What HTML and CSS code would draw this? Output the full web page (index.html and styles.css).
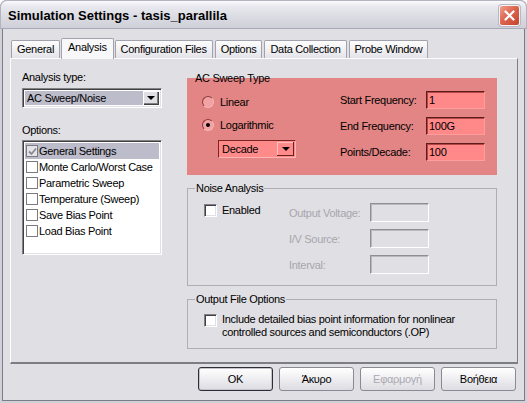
FILE: index.html
```html
<!DOCTYPE html>
<html>
<head>
<meta charset="utf-8">
<title>Simulation Settings</title>
<link rel="stylesheet" href="styles.css">
</head>
<body>
<div class="window">
  <div class="titlebar">
    <span class="title">Simulation Settings - tasis_parallila</span>
    <span class="close"><svg width="13" height="13" viewBox="0 0 13 13"><path d="M2.5 2.5L10.5 10.5M10.5 2.5L2.5 10.5" stroke="#fff" stroke-width="2.2" stroke-linecap="round"/></svg></span>
  </div>
  <div class="content">
    <div class="tabs">
      <div class="tab">General</div>
      <div class="tab active">Analysis</div>
      <div class="tab">Configuration Files</div>
      <div class="tab">Options</div>
      <div class="tab">Data Collection</div>
      <div class="tab">Probe Window</div>
    </div>
    <div class="panel">
      <div class="left">
        <div class="lbl">Analysis type:</div>
        <div class="combo">
          <span class="combo-text">AC Sweep/Noise</span>
          <span class="combo-btn"><span class="tri"></span></span>
        </div>
        <div class="lbl opts">Options:</div>
        <div class="list">
          <div class="item sel"><span class="cb checked"><svg width="9" height="9" viewBox="0 0 9 9"><path d="M1 4.5L3.5 7L8 1.5" fill="none" stroke="#8a8a92" stroke-width="1.8"/></svg></span>General Settings</div>
          <div class="item"><span class="cb"></span>Monte Carlo/Worst Case</div>
          <div class="item"><span class="cb"></span>Parametric Sweep</div>
          <div class="item"><span class="cb"></span>Temperature (Sweep)</div>
          <div class="item"><span class="cb"></span>Save Bias Point</div>
          <div class="item"><span class="cb"></span>Load Bias Point</div>
        </div>
      </div>
      <div class="right">
        <div class="group ac">
          <div class="legend">AC Sweep Type</div>
          <div class="ac-body">
            <div class="ac-left">
              <div class="radio-row"><span class="radio"></span>Linear</div>
              <div class="radio-row"><span class="radio on"></span>Logarithmic</div>
              <div class="combo red">
                <span class="combo-text">Decade</span>
                <span class="combo-btn"><span class="tri"></span></span>
              </div>
            </div>
            <div class="ac-right">
              <div class="frow"><span class="flbl">Start Frequency:</span><span class="field redf">1</span></div>
              <div class="frow"><span class="flbl">End Frequency:</span><span class="field redf">100G</span></div>
              <div class="frow"><span class="flbl">Points/Decade:</span><span class="field redf">100</span></div>
            </div>
          </div>
        </div>
        <div class="group noise">
          <div class="legend">Noise Analysis</div>
          <div class="noise-body">
            <div class="noise-left"><span class="chk"></span>Enabled</div>
            <div class="noise-right">
              <div class="nrow"><span class="nlbl">Output Voltage:</span><span class="field dis"></span></div>
              <div class="nrow"><span class="nlbl">I/V Source:</span><span class="field dis"></span></div>
              <div class="nrow"><span class="nlbl">Interval:</span><span class="field dis"></span></div>
            </div>
          </div>
        </div>
        <div class="group out">
          <div class="legend">Output File Options</div>
          <div class="out-body">
            <span class="chk"></span>
            <span class="out-text">Include detailed bias point information for nonlinear<br>controlled sources and semiconductors (.OP)</span>
          </div>
        </div>
      </div>
    </div>
    <div class="buttons">
      <div class="btn default">OK</div>
      <div class="btn">Άκυρο</div>
      <div class="btn disabled">Εφαρμογή</div>
      <div class="btn">Βοήθεια</div>
    </div>
  </div>
</div>
</body>
</html>
```

FILE: styles.css
```css
* { box-sizing: border-box; }

body {
  margin: 0;
  background: #ffffff;
  font-family: "Liberation Sans", Arial, sans-serif;
  font-size: 11px;
  letter-spacing: -0.3px;
  color: #000;
}

.window {
  width: 527px;
  height: 403px;
  background: #e0dfe3;
  box-shadow: inset 0 0 0 2px #d0d0d8, inset 0 0 0 3px #7c7c89;
  border-radius: 7px 7px 0 0;
  display: flex;
  flex-direction: column;
}

.titlebar {
  height: 29px;
  flex: none;
  display: flex;
  align-items: center;
  padding: 2px 6px 0 7px;
  border-radius: 7px 7px 0 0;
  background: linear-gradient(#fbfbfd 0, #e9e9ef 18%, #dcdce4 55%, #cfcfd9 100%);
  border: 1px solid #b4b4c0;
  border-bottom: 1px solid #a8a8b6;
}

.title {
  font-weight: bold;
  font-size: 13px;
  letter-spacing: 0;
  color: #000;
}

.close {
  margin-left: auto;
  width: 21px;
  height: 21px;
  border-radius: 3px;
  border: 1px solid #f4f4f4;
  background: linear-gradient(135deg, #f0a08e 0%, #dd6550 45%, #c5432c 100%);
  display: flex;
  align-items: center;
  justify-content: center;
  box-shadow: 0 0 0 1px #b8b8c2;
}

.content {
  flex: 1;
  padding: 8px 9px 0 10px;
  display: flex;
  flex-direction: column;
}

.tabs {
  height: 21px;
  display: flex;
  align-items: flex-end;
  padding-left: 1px;
  position: relative;
  z-index: 1;
}

.tab {
  height: 18px;
  padding: 0 5px;
  margin-right: 2px;
  line-height: 17px;
  border: 1px solid #a2a2ae;
  border-bottom: none;
  border-radius: 2px 2px 0 0;
  background: linear-gradient(#fdfdfd, #ececf0 70%, #e2e2e8);
  white-space: nowrap;
}

.tab.active {
  height: 21px;
  line-height: 17px;
  margin: 0 1px -1px -1px;
  padding: 0 6px;
  background: #f8f8fa;
}

.panel {
  height: 306px;
  border-top: 1px solid #fdfdfd;
  border-left: 1px solid #fdfdfd;
  border-right: 1px solid #7d7d86;
  border-bottom: 2px solid #7d7d86;
  padding: 12px 20px 0 11px;
  display: flex;
  gap: 25px;
}

.left {
  width: 140px;
  flex: none;
  display: flex;
  flex-direction: column;
}

.lbl {
  line-height: 13px;
}

.lbl.opts {
  margin-top: 16px;
}

.combo {
  margin-top: 4px;
  height: 20px;
  display: flex;
  align-items: stretch;
  border: 1px solid;
  border-color: #828288 #ffffff #ffffff #828288;
  box-shadow: inset 1px 1px 0 #404040, inset -1px -1px 0 #e0dfe3;
  padding: 2px;
  background: #ffffff;
}

.combo-text {
  flex: 1;
  background: #bdbcca;
  line-height: 14px;
  padding-left: 2px;
}

.combo-btn {
  width: 16px;
  flex: none;
  background: #e0dfe3;
  box-shadow: inset 1px 1px 0 #ffffff, inset -1px -1px 0 #404040, inset -2px -2px 0 #808080;
  display: flex;
  align-items: center;
  justify-content: center;
}

.tri {
  width: 0;
  height: 0;
  border-left: 4px solid transparent;
  border-right: 4px solid transparent;
  border-top: 4px solid #000;
}

.list {
  margin-top: 3px;
  height: 115px;
  border: 1px solid;
  border-color: #828288 #ffffff #ffffff #828288;
  box-shadow: inset 1px 1px 0 #404040, inset -1px -1px 0 #e0dfe3;
  background: #ffffff;
  padding: 2px 2px 0 2px;
}

.item {
  height: 16px;
  line-height: 16px;
  display: flex;
  align-items: center;
  white-space: nowrap;
}

.item.sel {
  background: #bdbcca;
}

.cb {
  width: 12px;
  height: 12px;
  border: 1px solid #7a7a80;
  background: #ffffff;
  margin: 0 1px 0 1px;
  display: flex;
  align-items: center;
  justify-content: center;
}

.cb.checked {
  background: #e4e4e8;
}

.right {
  flex: 1;
  padding-top: 7px;
  display: flex;
  flex-direction: column;
}

.group {
  border: 1px solid #aeaeb8;
}

.legend {
  width: fit-content;
  margin: -7px 0 0 7px;
  padding: 0 1px;
  line-height: 13px;
  background: #e0dfe3;
}

.group.ac {
  background: #e28584;
  border-color: #e28584;
}

.group.ac .legend {
  background: transparent;
  margin-left: 6px;
}

.ac-body {
  display: flex;
  justify-content: space-between;
  padding: 6px 11px 13px 13px;
}

.ac-left {
  display: flex;
  flex-direction: column;
}

.radio-row {
  height: 23px;
  display: flex;
  align-items: center;
  padding-left: 1px;
  padding-bottom: 2px;
}

.radio {
  width: 12px;
  height: 12px;
  border-radius: 50%;
  border: 1px solid;
  border-color: #8a3c3c #f7b4b4 #f7b4b4 #8a3c3c;
  background: #f2a2a2;
  margin-right: 6px;
  display: flex;
  align-items: center;
  justify-content: center;
}

.radio.on::after {
  content: "";
  width: 4px;
  height: 4px;
  border-radius: 50%;
  background: #000;
}

.combo.red {
  margin: 3px 0 0 17px;
  width: 78px;
  height: 18px;
  background: #ff8a8a;
  border-color: #7a2626 #ffb4b4 #ffb4b4 #7a2626;
  box-shadow: none;
  padding: 0;
}

.combo.red .combo-text {
  background: transparent;
  line-height: 16px;
  padding-left: 3px;
}

.combo.red .combo-btn {
  background: #ff8a8a;
  width: 17px;
  margin: 1px 1px 1px 0;
  box-shadow: inset -1px -1px 0 #6a2020, inset 1px 1px 0 #ffc0c0;
}

.ac-right {
  display: flex;
  flex-direction: column;
  gap: 8px;
}

.frow {
  display: flex;
  align-items: center;
  height: 18px;
}

.flbl {
  width: 86px;
}

.field {
  display: block;
  width: 59px;
  height: 18px;
  border: 1px solid;
  line-height: 16px;
  padding-left: 2px;
}

.field.redf {
  background: #ff8888;
  border-color: #5e1c1c #ff9c9c #ff9c9c #5e1c1c;
  box-shadow: inset 1px 1px 0 #b04848;
}

.group.noise {
  margin-top: 13px;
}

.noise-body {
  display: flex;
  padding: 8px 0 11px 16px;
}

.noise-left {
  width: 85px;
  display: flex;
  align-items: flex-start;
  padding-top: 1px;
  line-height: 13px;
}

.chk {
  width: 13px;
  height: 13px;
  flex: none;
  border: 1px solid;
  border-color: #808086 #ffffff #ffffff #808086;
  box-shadow: inset 1px 1px 0 #404040, inset -1px -1px 0 #e0dfe3;
  background: #ffffff;
  margin-right: 5px;
}

.noise-right {
  display: flex;
  flex-direction: column;
  gap: 7px;
}

.nrow {
  display: flex;
  align-items: center;
  height: 19px;
}

.nlbl {
  width: 81px;
  color: #a7a6ad;
}

.field.dis {
  height: 19px;
  background: #e0dfe3;
  border-color: #8e8e94 #ffffff #ffffff #8e8e94;
  box-shadow: inset 1px 1px 0 #b8b8be;
}

.group.out {
  margin-top: 13px;
}

.out-body {
  display: flex;
  align-items: flex-start;
  padding: 7px 0 9px 16px;
}

.out-body .chk {
  margin-top: 1px;
}

.out-text {
  line-height: 13px;
}

.buttons {
  display: flex;
  justify-content: flex-end;
  gap: 6px;
  margin-top: 3px;
  padding-right: 2px;
}

.btn {
  width: 75px;
  height: 24px;
  border: 1px solid #8a8a94;
  border-radius: 3px;
  background: linear-gradient(#ffffff, #f0f0f3 45%, #dcdce2);
  display: flex;
  align-items: center;
  justify-content: center;
}

.btn.default {
  border-color: #2e2e38;
  box-shadow: inset 0 0 0 1px #c4c4cc;
}

.btn.disabled {
  color: #aaa9b0;
}
```
